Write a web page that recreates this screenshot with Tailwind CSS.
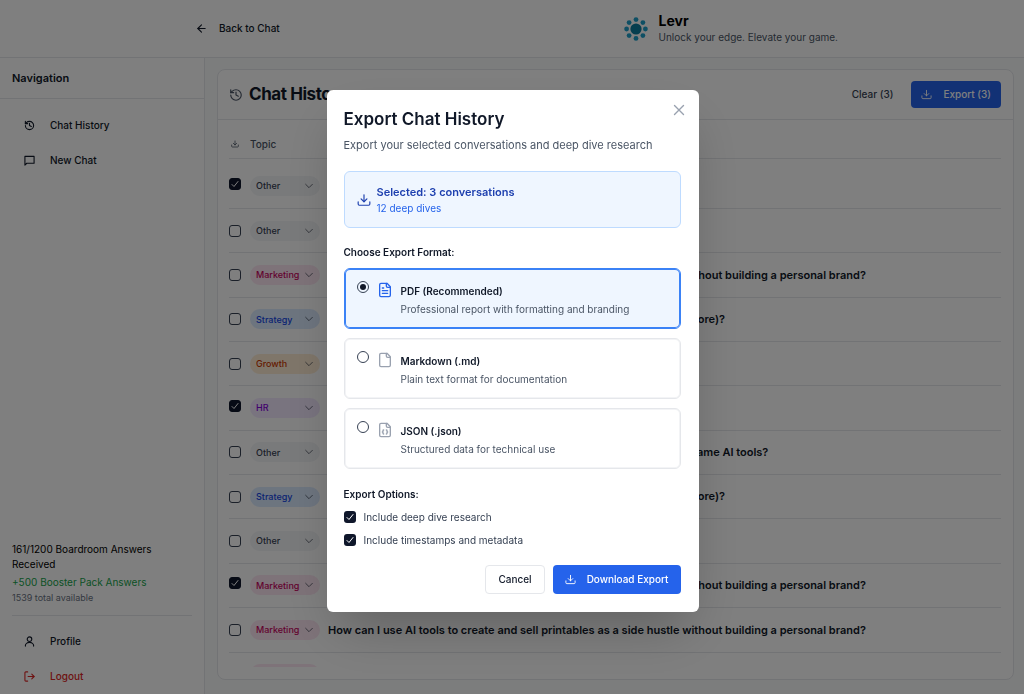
<!DOCTYPE html>
<html lang="en">
  <head>
    <meta charset="UTF-8" />
    <meta name="viewport" content="width=device-width, initial-scale=1.0" />
    <title>Levr - Chat History</title>
    <script src="https://cdn.jsdelivr.net/npm/@tailwindcss/browser@4"></script>
  </head>

  <body class="bg-white text-[10px] text-gray-900 font-['Inter',sans-serif]">
    <!-- Shared icons -->
    <svg class="hidden">
      <symbol id="i-history" viewBox="0 0 24 24"><path d="M3 12a9 9 0 1 0 9-9 9.75 9.75 0 0 0-6.74 2.74L3 8" /><path d="M3 3v5h5" /><path d="M12 7v5l4 2" /></symbol>
      <symbol id="i-download" viewBox="0 0 24 24"><path d="M12 3v12" /><path d="m7 10 5 5 5-5" /><path d="M22 15v4a2 2 0 0 1-2 2H4a2 2 0 0 1-2-2v-4" /></symbol>
      <symbol id="i-chevron" viewBox="0 0 24 24"><path d="m4 8 8 8 8-8" /></symbol>
    </svg>

    <div class="flex h-screen flex-col overflow-hidden">
      <header class="h-[58px] shrink-0 border-b border-gray-200">
        <div class="mx-auto flex h-full max-w-[652px] items-center justify-between">
          <a href="#" class="flex items-center gap-3 pl-2.5 font-medium">
            <svg class="size-[11px]" viewBox="0 0 24 24" fill="none" stroke="currentColor" stroke-width="2.4" stroke-linecap="round" stroke-linejoin="round"><path d="m12 20-8-8 8-8" /><path d="M20 12H4" /></svg>
            Back to Chat
          </a>
          <div class="flex items-center gap-2.5">
            <svg class="size-6" viewBox="0 0 24 24" fill="#1d9fc9">
              <circle cx="12" cy="12" r="5.6" fill="#0c7c9e" />
              <circle cx="12" cy="2.6" r="2.4" /><circle cx="18.9" cy="5.6" r="2.4" />
              <circle cx="21.4" cy="12" r="2.4" /><circle cx="18.9" cy="18.6" r="2.4" />
              <circle cx="12" cy="21.4" r="2.4" /><circle cx="5.1" cy="18.6" r="2.4" />
              <circle cx="2.6" cy="12" r="2.4" /><circle cx="5.1" cy="5.6" r="2.4" />
            </svg>
            <div>
              <h1 class="text-sm leading-[17px] font-bold text-black">Levr</h1>
              <p class="leading-[17px] text-gray-600">Unlock your edge. Elevate your game.</p>
            </div>
          </div>
        </div>
      </header>

      <div class="flex min-h-0 flex-1">
        <!-- Sidebar -->
        <aside class="flex w-[205px] shrink-0 flex-col border-r border-gray-200">
          <h2 class="flex h-[41px] items-center border-b border-gray-200 px-3 text-[11px] font-semibold">Navigation</h2>
          <nav class="flex flex-col gap-1.5 px-3 py-3 font-medium">
            <a href="#" class="flex h-[29px] items-center gap-[15px] px-3">
              <svg class="size-[11px]" fill="none" stroke="currentColor" stroke-width="2.4" stroke-linecap="round" stroke-linejoin="round"><use href="#i-history" /></svg>
              Chat History
            </a>
            <a href="#" class="flex h-[29px] items-center gap-[15px] px-3">
              <svg class="size-[11px]" viewBox="0 0 24 24" fill="none" stroke="currentColor" stroke-width="2.4" stroke-linecap="round" stroke-linejoin="round"><path d="M22 3H2v19l4-4h16z" /></svg>
              New Chat
            </a>
          </nav>
          <div class="mt-auto px-3 pb-[3px]">
            <div class="border-b border-gray-200 pb-[9px]">
              <p class="pr-6 leading-[15px] text-black">161/1200 Boardroom Answers Received</p>
              <p class="mt-0.5 leading-4 text-[#16a34a]">+500 Booster Pack Answers</p>
              <p class="text-[9px] leading-4 text-gray-500">1539 total available</p>
            </div>
            <nav class="flex flex-col gap-1.5 pt-[11px] font-medium">
              <a href="#" class="flex h-[29px] items-center gap-[15px] px-3">
                <svg class="size-[11px]" viewBox="0 0 24 24" fill="none" stroke="currentColor" stroke-width="2.4" stroke-linecap="round" stroke-linejoin="round"><circle cx="12" cy="7" r="5" /><path d="M3 22v-1a9 7 0 0 1 18 0v1" /></svg>
                Profile
              </a>
              <a href="#" class="flex h-[29px] items-center gap-[15px] px-3 text-[#dc2626]">
                <svg class="size-[11px]" viewBox="0 0 24 24" fill="none" stroke="currentColor" stroke-width="2.4" stroke-linecap="round" stroke-linejoin="round"><path d="M8 2H4a2 2 0 0 0-2 2v16a2 2 0 0 0 2 2h4" /><path d="M9 12h13" /><path d="m17 7 5 5-5 5" /></svg>
                Logout
              </a>
            </nav>
          </div>
        </aside>

        <!-- History -->
        <main class="min-w-0 flex-1 bg-gray-50 pt-[11px] pr-2.5 pb-3.5 pl-3">
          <section class="flex h-full flex-col rounded-lg border border-gray-200 bg-white">
            <div class="flex h-[50px] shrink-0 items-center gap-1.5 border-b border-gray-200 pr-3 pl-[11px]">
              <svg class="size-3.5 text-gray-600" fill="none" stroke="currentColor" stroke-width="2" stroke-linecap="round" stroke-linejoin="round"><use href="#i-history" /></svg>
              <h2 class="text-[17px] font-bold tracking-tight">Chat History</h2>
              <button class="ml-auto px-3 font-medium text-gray-700">Clear (3)</button>
              <button class="flex h-[27px] items-center gap-[11px] rounded bg-[#2563eb] px-2.5 font-medium text-white">
                <svg class="size-[11px]" fill="none" stroke="currentColor" stroke-width="2" stroke-linecap="round" stroke-linejoin="round"><use href="#i-download" /></svg>
                Export (3)
              </button>
            </div>
            <div class="mt-[11px] mr-3 mb-3 ml-[11px] min-h-0 flex-1 overflow-hidden">
              <table class="h-[566px] w-full table-fixed text-left">
                <thead>
                  <tr class="h-[27px] border-b border-gray-200 text-gray-600">
                    <th class="w-[21px]" aria-label="Selected for export">
                      <svg class="ml-0.5 size-2" fill="none" stroke="currentColor" stroke-width="2.4" stroke-linecap="round" stroke-linejoin="round"><use href="#i-download" /></svg>
                    </th>
                    <th class="w-[78px] font-medium">Topic</th>
                    <th aria-label="Question"></th>
                  </tr>
                </thead>
                <tbody id="historyRows"></tbody>
              </table>
            </div>
          </section>
        </main>
      </div>
    </div>

    <!-- Export dialog -->
    <div class="fixed inset-0 flex items-center justify-center bg-black/50 pt-2 pl-px">
      <div role="dialog" aria-modal="true" aria-labelledby="exportTitle" class="relative w-[372px] rounded-md bg-white pt-[17px] pr-[18px] pb-[18px] pl-[17px] shadow-2xl">
        <button aria-label="Close" class="absolute top-3.5 right-3.5 text-gray-400">
          <svg class="size-3" viewBox="0 0 24 24" fill="none" stroke="currentColor" stroke-width="2.8" stroke-linecap="round"><path d="M3 3l18 18M21 3 3 21" /></svg>
        </button>
        <h2 id="exportTitle" class="text-[17px] leading-6 font-semibold">Export Chat History</h2>
        <p class="mt-1.5 text-[11px] leading-4 text-gray-600">Export your selected conversations and deep dive research</p>

        <div class="mt-[18px] flex h-[57px] items-center gap-1.5 rounded-md border border-blue-200 bg-blue-50 px-3 text-[#1e40af]">
          <svg class="size-3.5" fill="none" stroke="currentColor" stroke-width="2" stroke-linecap="round" stroke-linejoin="round"><use href="#i-download" /></svg>
          <div>
            <p class="text-[11px] leading-4 font-semibold">Selected: 3 conversations</p>
            <p class="leading-4 text-[#2563eb]">12 deep dives</p>
          </div>
        </div>

        <fieldset class="mt-4">
          <legend class="leading-4 font-semibold">Choose Export Format:</legend>
          <div class="mt-2 flex flex-col gap-[9px]">
            <label class="flex h-[61px] items-start rounded-md border border-[#3b82f6] bg-blue-50 px-3 pt-3 ring-1 ring-[#3b82f6] ring-inset">
              <input type="radio" name="format" checked class="size-3 appearance-none rounded-full border border-gray-700 bg-gray-900 bg-clip-content p-0.5" />
              <svg class="mt-px ml-2 size-4 text-[#2563eb]" viewBox="0 0 24 24" fill="none" stroke="currentColor" stroke-width="2" stroke-linecap="round" stroke-linejoin="round"><path d="M15 2H6a2 2 0 0 0-2 2v16a2 2 0 0 0 2 2h12a2 2 0 0 0 2-2V7Z" /><path d="M14 2v4a2 2 0 0 0 2 2h4" /><path d="M10 9H8" /><path d="M16 13H8" /><path d="M16 17H8" /></svg>
              <span class="ml-2">
                <span class="mt-0.5 block leading-4 font-semibold">PDF (Recommended)</span>
                <span class="mt-0.5 block leading-4 text-gray-600">Professional report with formatting and branding</span>
              </span>
            </label>
            <label class="flex h-[61px] items-start rounded-md border border-gray-200 px-3 pt-3 ring-1 ring-gray-100 ring-inset">
              <input type="radio" name="format" class="size-3 appearance-none rounded-full border border-gray-700" />
              <svg class="mt-px ml-2 size-4 text-gray-400" viewBox="0 0 24 24" fill="none" stroke="currentColor" stroke-width="2" stroke-linecap="round" stroke-linejoin="round"><path d="M15 2H6a2 2 0 0 0-2 2v16a2 2 0 0 0 2 2h12a2 2 0 0 0 2-2V7Z" /><path d="M14 2v4a2 2 0 0 0 2 2h4" /></svg>
              <span class="ml-2">
                <span class="mt-0.5 block leading-4 font-semibold">Markdown (.md)</span>
                <span class="mt-0.5 block leading-4 text-gray-600">Plain text format for documentation</span>
              </span>
            </label>
            <label class="flex h-[61px] items-start rounded-md border border-gray-200 px-3 pt-3 ring-1 ring-gray-100 ring-inset">
              <input type="radio" name="format" class="size-3 appearance-none rounded-full border border-gray-700" />
              <svg class="mt-px ml-2 size-4 text-gray-400" viewBox="0 0 24 24" fill="none" stroke="currentColor" stroke-width="2" stroke-linecap="round" stroke-linejoin="round"><path d="M15 2H6a2 2 0 0 0-2 2v16a2 2 0 0 0 2 2h12a2 2 0 0 0 2-2V7Z" /><path d="M14 2v4a2 2 0 0 0 2 2h4" /><path d="M10 12a1 1 0 0 0-1 1v1a1 1 0 0 1-1 1 1 1 0 0 1 1 1v1a1 1 0 0 0 1 1" /><path d="M14 18a1 1 0 0 0 1-1v-1a1 1 0 0 1 1-1 1 1 0 0 1-1-1v-1a1 1 0 0 0-1-1" /></svg>
              <span class="ml-2">
                <span class="mt-0.5 block leading-4 font-semibold">JSON (.json)</span>
                <span class="mt-0.5 block leading-4 text-gray-600">Structured data for technical use</span>
              </span>
            </label>
          </div>
        </fieldset>

        <fieldset class="mt-[17px]">
          <legend class="leading-4 font-semibold">Export Options:</legend>
          <div class="mt-[7px] flex flex-col gap-[7px] text-gray-700">
            <label class="flex h-4 items-center gap-2">
              <span class="grid size-3">
                <input type="checkbox" checked class="col-start-1 row-start-1 size-3 appearance-none rounded-[3px] bg-slate-900" />
                <svg class="pointer-events-none col-start-1 row-start-1 size-3" viewBox="0 0 12 12" fill="none" stroke="white" stroke-linecap="round" stroke-linejoin="round"><path d="m3 6.5 2 2 4-5" /></svg>
              </span>
              Include deep dive research
            </label>
            <label class="flex h-4 items-center gap-2">
              <span class="grid size-3">
                <input type="checkbox" checked class="col-start-1 row-start-1 size-3 appearance-none rounded-[3px] bg-slate-900" />
                <svg class="pointer-events-none col-start-1 row-start-1 size-3" viewBox="0 0 12 12" fill="none" stroke="white" stroke-linecap="round" stroke-linejoin="round"><path d="m3 6.5 2 2 4-5" /></svg>
              </span>
              Include timestamps and metadata
            </label>
          </div>
        </fieldset>

        <div class="mt-[17px] flex justify-end gap-2 font-medium">
          <button class="h-[29px] rounded border border-gray-200 px-3">Cancel</button>
          <button class="flex h-[29px] items-center gap-[11px] rounded bg-[#2563eb] px-3 text-white">
            <svg class="size-[11px]" fill="none" stroke="currentColor" stroke-width="2" stroke-linecap="round" stroke-linejoin="round"><use href="#i-download" /></svg>
            Download Export
          </button>
        </div>
      </div>
    </div>

    <script>
      const topicStyles = {
        Other: "bg-gray-100 text-gray-700",
        Marketing: "bg-pink-100 text-pink-700",
        Strategy: "bg-blue-100 text-blue-700",
        Growth: "bg-orange-100 text-orange-700",
        HR: "bg-purple-100 text-purple-700",
      };
      const printables = "How can I use AI tools to create and sell printables as a side hustle without building a personal brand?";
      const store = "What products should I sell in my first online shop (and what price before)?";
      const sameTools = "How do we stand out from rivals when every competitor is using the same AI tools?";

      const rows = [
        { topic: "Other", checked: true, text: "" },
        { topic: "Other", text: "" },
        { topic: "Marketing", text: printables },
        { topic: "Strategy", text: store },
        { topic: "Growth", text: "" },
        { topic: "HR", checked: true, text: "" },
        { topic: "Other", text: sameTools },
        { topic: "Strategy", text: store },
        { topic: "Other", text: "" },
        { topic: "Marketing", checked: true, text: printables },
        { topic: "Marketing", text: printables },
        { topic: "Marketing", text: "" },
      ];

      document.getElementById("historyRows").innerHTML = rows.map((row, i) => `
        <tr class="h-11 border-b border-gray-200 first:h-[50px] first:*:pt-1.5">
          <td>
            <span class="grid size-3 ${row.checked ? "mb-1" : ""}">
              <input type="checkbox" aria-label="Select conversation ${i + 1}" ${row.checked ? "checked" : ""} class="col-start-1 row-start-1 size-3 appearance-none rounded-[3px] border border-gray-700 checked:border-slate-900 checked:bg-slate-900" />
              ${row.checked ? `<svg class="pointer-events-none col-start-1 row-start-1 size-3" viewBox="0 0 12 12" fill="none" stroke="white" stroke-linecap="round" stroke-linejoin="round"><path d="m3 6.5 2 2 4-5" /></svg>` : ""}
            </span>
          </td>
          <td>
            <div class="grid w-[70px] items-center">
              <select aria-label="Topic" class="col-start-1 row-start-1 h-5 appearance-none rounded-full px-1.5 text-[9px] font-medium ${topicStyles[row.topic]}">
                <option>${row.topic}</option>
              </select>
              <svg class="pointer-events-none col-start-1 row-start-1 mr-1.5 size-2.5 justify-self-end opacity-60" fill="none" stroke="currentColor" stroke-width="2.4" stroke-linecap="round" stroke-linejoin="round"><use href="#i-chevron" /></svg>
            </div>
          </td>
          <td class="truncate text-[11px] font-semibold">${row.text}</td>
        </tr>`
      ).join("");
    </script>
  </body>
</html>
